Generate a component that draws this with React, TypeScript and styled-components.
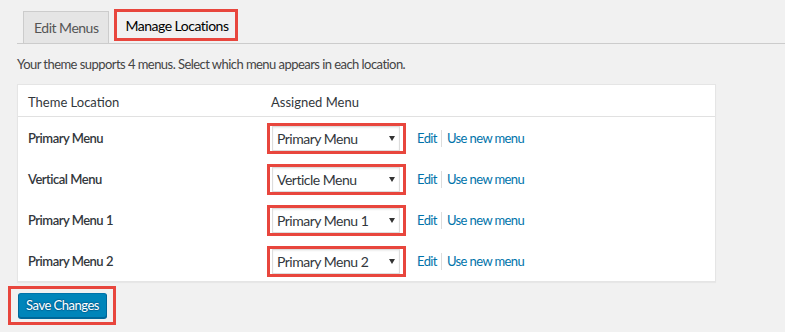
import React from "react";
import styled, { createGlobalStyle } from "styled-components";

const FONT = `Lato, "Liberation Sans", sans-serif`;
const RED = "#e8463d";

const Global = createGlobalStyle`
  html, body { margin: 0; padding: 0; background: #f1f1f1; }
  body { font-family: ${FONT}; font-size: 13px; color: #444; }
  * { box-sizing: border-box; }
`;

const Page = styled.div`
  padding: 9px 0 0 17px;
  width: 785px;
  height: 332px;
  overflow: hidden;
`;

const TabBar = styled.div`
  display: flex;
  align-items: flex-end;
  padding-left: 6px;
  border-bottom: 1px solid #ccc;
`;

const Tab = styled.div<{ $active?: boolean }>`
  display: flex;
  align-items: center;
  height: ${(p) => (p.$active ? "26px" : "32px")};
  padding: 0 10px 0 10px;
  font-size: 14px;
  font-weight: 400;
  letter-spacing: -0.5px;
  color: ${(p) => (p.$active ? "#000" : "#555")};
  background: ${(p) => (p.$active ? "#f1f1f1" : "#e5e5e5")};
  border: 1px solid #ccc;
  border-bottom: none;
  ${(p) => (p.$active ? "border: none; padding: 0 7px 0 8px;" : "")}
`;

const Highlight = styled.div<{ $pad?: string }>`
  border: 3px solid ${RED};
  padding: ${(p) => p.$pad || "0"};
  display: inline-flex;
  align-items: center;
`;

const TabHighlight = styled(Highlight)`
  margin: 0 0 2px 5px;
`;

const Description = styled.p`
  margin: 0;
  padding: 10px 0 0;
  height: 40px;
  line-height: 20px;
  font-size: 13px;
  letter-spacing: -0.55px;
  color: #444;
`;

const Table = styled.div`
  width: 699px;
  background: #fff;
  border: 1px solid #e5e5e5;
  box-shadow: 0 1px 1px rgba(0, 0, 0, 0.04);
  display: grid;
  grid-template-columns: 243px 1fr;
`;

const HeadCell = styled.div`
  height: 32px;
  display: flex;
  align-items: center;
  padding: 2px 10px 0;
  font-size: 13px;
  color: #32373c;
  border-bottom: 1px solid #e1e1e1;
`;

const LabelCell = styled.div`
  height: 41px;
  display: flex;
  align-items: center;
  padding: 1px 10px 0;
  font-size: 13px;
  font-weight: 600;
  letter-spacing: -0.5px;
  color: #32373c;
`;

const MenuCell = styled.div`
  height: 41px;
  display: flex;
  align-items: center;
  padding: 1px 0 0 6px;
`;

const SelectBox = styled.div`
  width: 128px;
  height: 25px;
  display: flex;
  align-items: center;
  justify-content: space-between;
  padding: 0 4px 0 4px;
  background: #fff;
  border: 1px solid #ddd;
  box-shadow: inset 0 1px 2px rgba(0, 0, 0, 0.07);
  font-size: 14px;
  letter-spacing: -0.5px;
  color: #32373c;
`;

const Links = styled.div`
  display: flex;
  align-items: center;
  margin-left: 11px;
  font-size: 13px;
  letter-spacing: -0.6px;
`;

const Link = styled.a`
  color: #0073aa;
  text-decoration: none;
`;

const Sep = styled.span`
  width: 1px;
  height: 17px;
  background: #ddd;
  margin: 0 5px 0 4px;
`;

const SaveHighlight = styled(Highlight)`
  margin: 4px 0 0 -9px;
  padding: 4px 6px 4px 7px;
`;

const Button = styled.button`
  width: 89px;
  height: 25px;
  padding: 0 0 1px;
  font-family: ${FONT};
  font-size: 13px;
  letter-spacing: -0.5px;
  color: #fff;
  background: #0085ba;
  border: 1px solid;
  border-color: #0073aa #006799 #006799;
  border-radius: 3px;
  box-shadow: 0 1px 0 #006799;
  text-shadow: 0 -1px 1px #006799, 1px 0 1px #006799, 0 1px 1px #006799, -1px 0 1px #006799;
`;

const Arrow = () => (
  <svg width="6" height="5" viewBox="0 0 6 5">
    <path d="M0 0 H6 L3 5 Z" fill="#333" />
  </svg>
);

const rows = [
  { label: "Primary Menu", value: "Primary Menu" },
  { label: "Vertical Menu", value: "Verticle Menu" },
  { label: "Primary Menu 1", value: "Primary Menu 1" },
  { label: "Primary Menu 2", value: "Primary Menu 2" },
];

export default function App() {
  return (
    <>
      <Global />
      <Page>
        <TabBar>
          <Tab>Edit Menus</Tab>
          <TabHighlight>
            <Tab $active>Manage Locations</Tab>
          </TabHighlight>
        </TabBar>
        <Description>
          Your theme supports 4 menus. Select which menu appears in each location.
        </Description>
        <Table>
          <HeadCell>Theme Location</HeadCell>
          <HeadCell>Assigned Menu</HeadCell>
          {rows.map((r) => (
            <React.Fragment key={r.label}>
              <LabelCell>{r.label}</LabelCell>
              <MenuCell>
                <Highlight $pad="0 3px 0 2px">
                  <SelectBox>
                    <span>{r.value}</span>
                    <Arrow />
                  </SelectBox>
                </Highlight>
                <Links>
                  <Link href="#">Edit</Link>
                  <Sep />
                  <Link href="#">Use new menu</Link>
                </Links>
              </MenuCell>
            </React.Fragment>
          ))}
        </Table>
        <SaveHighlight>
          <Button>Save Changes</Button>
        </SaveHighlight>
      </Page>
    </>
  );
}
